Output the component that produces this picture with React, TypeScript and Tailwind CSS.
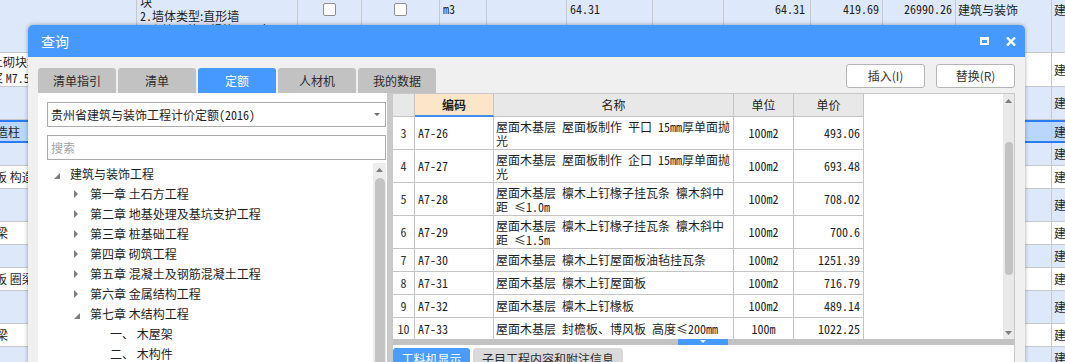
import React from "react";

const UI = "font-['Noto_Sans_CJK_SC','Noto_Sans',sans-serif]";
const MONO = "font-['Noto_Sans_Mono_CJK_SC','Liberation_Mono',monospace]";

// widths of the grid columns behind the dialog
const midCols = ["w-[161px]", "w-[64px]", "w-[78px]", "w-[47px]", "w-[80px]", "w-[86px]", "w-[71px]", "w-[87px]", "w-[72px]", "w-[73px]", "w-[96px]"];

const toneCls: Record<string, string> = {
    blue: "bg-[#dde9fb] border-b border-[#c8c8c8]",
    white: "bg-white border-b border-[#c8c8c8]",
    sel: "bg-[#b9d7fb] border-y-2 border-[#2a7cf0]",
};

const bgRows = [
    { h: "h-[34px]", tone: "white", left: <div className="-ml-[9px] leading-[16px]">土砌块墙<br />浆 <span className={MONO}>M7.5</span></div> },
    { h: "h-[33px]", tone: "blue" },
    { h: "h-[23px]", tone: "sel", left: <div className="-ml-[16px]">构造柱</div> },
    { h: "h-[23px]", tone: "blue" },
    { h: "h-[23px]", tone: "white", left: <div className="-ml-[5px]">板 构造柱</div> },
    { h: "h-[33px]", tone: "blue" },
    { h: "h-[23px]", tone: "white", left: <div className="-ml-[16px]">圈梁</div> },
    { h: "h-[23px]", tone: "blue" },
    { h: "h-[23px]", tone: "white", left: <div className="-ml-[5px]">板 圈梁</div> },
    { h: "h-[33px]", tone: "blue" },
    { h: "h-[23px]", tone: "white", left: <div className="-ml-[16px]">圈梁</div> },
    { h: "h-[23px]", tone: "blue" },
];

const tabs = ["清单指引", "清单", "定额", "人材机", "我的数据"];

const tree = [
    { pad: "pl-[7px]", icon: "open", text: "建筑与装饰工程" },
    { pad: "pl-[27px]", icon: "closed", text: "第一章 土石方工程" },
    { pad: "pl-[27px]", icon: "closed", text: "第二章 地基处理及基坑支护工程" },
    { pad: "pl-[27px]", icon: "closed", text: "第三章 桩基础工程" },
    { pad: "pl-[27px]", icon: "closed", text: "第四章 砌筑工程" },
    { pad: "pl-[27px]", icon: "closed", text: "第五章 混凝土及钢筋混凝土工程" },
    { pad: "pl-[27px]", icon: "closed", text: "第六章 金属结构工程" },
    { pad: "pl-[27px]", icon: "open", text: "第七章 木结构工程" },
    { pad: "pl-[47px]", icon: "", text: "一、 木屋架" },
    { pad: "pl-[47px]", icon: "", text: "二、 木构件" },
];

const rows = [
    { n: 3, code: "A7-26", name: ["屋面木基层 屋面板制作 平口 15mm厚单面抛", "光"], unit: "100m2", price: "493.06" },
    { n: 4, code: "A7-27", name: ["屋面木基层 屋面板制作 企口 15mm厚单面抛", "光"], unit: "100m2", price: "693.48" },
    { n: 5, code: "A7-28", name: ["屋面木基层 檩木上钉椽子挂瓦条 檩木斜中", "距 ≤1.0m"], unit: "100m2", price: "708.02" },
    { n: 6, code: "A7-29", name: ["屋面木基层 檩木上钉椽子挂瓦条 檩木斜中", "距 ≤1.5m"], unit: "100m2", price: "700.6" },
    { n: 7, code: "A7-30", name: ["屋面木基层 檩木上钉屋面板油毡挂瓦条"], unit: "100m2", price: "1251.39" },
    { n: 8, code: "A7-31", name: ["屋面木基层 檩木上钉屋面板"], unit: "100m2", price: "716.79" },
    { n: 9, code: "A7-32", name: ["屋面木基层 檩木上钉椽板"], unit: "100m2", price: "489.14" },
    { n: 10, code: "A7-33", name: ["屋面木基层 封檐板、博风板 高度≤200mm"], unit: "100m", price: "1022.25" },
];

// latin runs in the half-width face, wider gaps between words
function Mixed({ text }: { text: string }) {
    const parts = text.replace(/ /g, "\u2002").split(/([0-9A-Za-z.]+)/);
    return <>{parts.map((p, i) => (i % 2 ? <span key={i} className={MONO}>{p}</span> : p))}</>
}

function Checkbox() {
    return <div className="mt-[3px] w-[13px] h-[13px] border border-[#8f8f8f] rounded-[2px] bg-white" />
}

function TreeIcon({ kind }: { kind: string }) {
    if (kind === "open")
        return <svg width="6" height="6" className="mt-[3px]"><polygon points="6,0 6,6 0,6" fill="#7d7d7d" /></svg>
    if (kind === "closed")
        return <svg width="5" height="8"><polygon points="0,0 4,4 0,8" fill="#7d7d7d" /></svg>
    return null
}

export default function App() {
    return (
        <div className={`relative w-[1065px] h-[362px] overflow-hidden bg-white text-[12px] text-[#1e1e1e] ${UI}`}>
            {/* grid behind the dialog */}
            <div className="flex flex-col">
                <div className="flex h-[53px] bg-[#dde9fb] border-b border-[#c8c8c8]">
                    <div className="w-[137px] shrink-0 border-r border-[#c8c8c8]" />
                    <div className="w-[161px] shrink-0 border-r border-[#c8c8c8] overflow-hidden">
                        <div className="-mt-[5px] pl-[3px] leading-[14px] whitespace-nowrap">块<br /><span className={MONO}>2.</span>墙体类型:直形墙<br />3.砌块品种、规格、强度</div>
                    </div>
                    <div className="w-[64px] shrink-0 border-r border-[#c8c8c8] flex justify-center"><Checkbox /></div>
                    <div className="w-[78px] shrink-0 border-r border-[#c8c8c8] flex justify-center"><Checkbox /></div>
                    <div className={`w-[47px] shrink-0 border-r border-[#c8c8c8] pl-[3px] pt-[2px] leading-[14px] ${MONO}`}>m3</div>
                    <div className="w-[80px] shrink-0 border-r border-[#c8c8c8]" />
                    <div className={`w-[86px] shrink-0 border-r border-[#c8c8c8] pl-[3px] pt-[2px] leading-[14px] ${MONO}`}>64.31</div>
                    <div className="w-[71px] shrink-0 border-r border-[#c8c8c8]" />
                    <div className={`w-[87px] shrink-0 border-r border-[#c8c8c8] pr-[5px] pt-[2px] leading-[14px] text-right ${MONO}`}>64.31</div>
                    <div className={`w-[72px] shrink-0 border-r border-[#c8c8c8] pr-[3px] pt-[2px] leading-[14px] text-right ${MONO}`}>419.69</div>
                    <div className={`w-[73px] shrink-0 border-r border-[#c8c8c8] pr-[3px] pt-[2px] leading-[14px] text-right ${MONO}`}>26990.26</div>
                    <div className="w-[96px] shrink-0 border-r border-[#c8c8c8] pl-[2px] pt-[3px] leading-[14px] whitespace-nowrap">建筑与装饰</div>
                    <div className="flex-1 pl-[2px] pt-[3px] leading-[14px]">建</div>
                </div>
                {bgRows.map((r, i) => (
                    <div key={i} className={`flex ${r.h} ${toneCls[r.tone]}`}>
                        <div className="w-[137px] shrink-0 overflow-hidden border-r border-[#c8c8c8] flex items-center whitespace-nowrap">{r.left}</div>
                        {midCols.map((w, j) => (
                            <div key={j} className={`${w} shrink-0 border-r border-[#c8c8c8]`} />
                        ))}
                        <div className="flex-1 flex items-center pl-[2px]">建</div>
                    </div>
                ))}
            </div>

            {/* dialog */}
            <div className="absolute left-[28px] top-[25px] w-[997px] h-[345px] flex flex-col rounded-t-[5px] overflow-hidden shadow-[0_0_4px_rgba(0,0,0,0.35)]">
                <div className="h-[32px] shrink-0 bg-[#4599ff] flex items-center pl-[13px] pr-[9px] text-white">
                    <span className="text-[14px]">查询</span>
                    <div className="ml-auto flex items-center gap-[17px]">
                        <svg width="9" height="8"><path d="M0 0H9V8H0Z M2 3H7V6H2Z" fill="white" fillRule="evenodd" /></svg>
                        <svg width="10" height="9" viewBox="0 0 10 9"><path d="M1 0.5L9 8.5M9 0.5L1 8.5" stroke="white" strokeWidth="2.4" /></svg>
                    </div>
                </div>

                <div className="flex-1 min-h-0 bg-[#f0f0f0] px-[10px] pt-[7px] flex flex-col">
                    <div className="h-[29px] shrink-0 flex justify-between">
                        <div className="self-end flex gap-[2px]">
                            {tabs.map((t) => (
                                <div key={t} className={`w-[78px] h-[25px] rounded-t-[3px] flex items-center justify-center ${t === "定额" ? "bg-[#4599ff] text-white" : "bg-[#c2c2c2] text-[#2b2b2b]"}`}>{t}</div>
                            ))}
                        </div>
                        <div className="self-start flex gap-[11px]">
                            <button className="w-[79px] h-[24px] bg-white border border-[#b5b5b5] rounded-[3px] text-[#333]">插入(I)</button>
                            <button className="w-[79px] h-[24px] bg-white border border-[#b5b5b5] rounded-[3px] text-[#333]">替换(R)</button>
                        </div>
                    </div>

                    <div className="flex flex-1 min-h-0">
                        {/* left: library tree */}
                        <div className="w-[349px] shrink-0 bg-white flex flex-col pl-[9px] pr-[1px] pt-[9px]">
                            <div className="h-[25px] shrink-0 border border-[#ababab] flex items-center pl-[3px] pr-[5px] whitespace-nowrap">
                                <span>贵州省建筑与装饰工程计价定额<span className={MONO}>(2016)</span></span>
                                <svg width="6" height="3" className="ml-auto"><polygon points="0,0 6,0 3,3" fill="#6d6d6d" /></svg>
                            </div>
                            <div className="mt-[8px] h-[25px] shrink-0 border border-[#ababab] flex items-center pl-[3px] text-[#a3a3a3]">搜索</div>
                            <div className="mt-[3px] flex flex-1 min-h-0">
                                <div className="flex-1 pt-[1px]">
                                    {tree.map((n) => (
                                        <div key={n.text} className={`h-[20px] flex items-center whitespace-nowrap ${n.pad}`}>
                                            <div className="w-[16px] shrink-0 flex items-center"><TreeIcon kind={n.icon} /></div>
                                            <span>{n.text}</span>
                                        </div>
                                    ))}
                                </div>
                                <div className="w-[13px] shrink-0 bg-[#ededed] flex flex-col items-center pt-[5px]">
                                    <svg width="7" height="4"><polygon points="0,4 3.5,0 7,4" fill="#7d7d7d" /></svg>
                                    <div className="mt-[6px] w-[10px] h-[220px] rounded-full bg-[#c3c3c3]" />
                                </div>
                            </div>
                        </div>

                        <div className="w-[5px] shrink-0 bg-[#cacaca]" />

                        {/* right: quota table */}
                        <div className="w-[623px] shrink-0 bg-white border border-[#c8c8c8] flex flex-col">
                            <div className="flex h-[245px] shrink-0">
                                <div className="flex-1 overflow-hidden">
                                    <div className="flex h-[23px] w-[471px]">
                                        <div className="w-[22px] bg-[#e8e8e8] border-r border-b border-[#c4c4c4]" />
                                        <div className="w-[79px] bg-[#fde6c8] border-r border-[#c4c4c4] border-b-2 border-b-[#3d8ef0] flex items-center justify-center font-bold">编码</div>
                                        <div className="w-[240px] bg-[#e8e8e8] border-r border-b border-[#c4c4c4] flex items-center justify-center">名称</div>
                                        <div className="w-[60px] bg-[#e8e8e8] border-r border-b border-[#c4c4c4] flex items-center justify-center">单位</div>
                                        <div className="w-[70px] bg-[#e8e8e8] border-r border-b border-[#c4c4c4] flex items-center justify-center">单价</div>
                                    </div>
                                    {rows.map((r) => {
                                        const two = r.name.length > 1;
                                        return (
                                            <div key={r.n} className={`flex w-[471px] ${two ? "h-[33px]" : "h-[23px]"}`}>
                                                <div className={`w-[22px] border-r border-b border-[#c4c4c4] flex items-center justify-center text-[#333] ${MONO}`}>{r.n}</div>
                                                <div className={`w-[79px] border-r border-b border-[#c4c4c4] flex items-center pl-[3px] ${MONO}`}>{r.code}</div>
                                                <div className={`w-[240px] border-r border-b border-[#c4c4c4] pl-[2px] leading-[14px] whitespace-nowrap overflow-hidden ${two ? "pt-[3px]" : "flex items-center"}`}>
                                                    <div>{r.name.map((l, k) => <div key={k}><Mixed text={l} /></div>)}</div>
                                                </div>
                                                <div className={`w-[60px] border-r border-b border-[#c4c4c4] flex items-center justify-center ${MONO}`}>{r.unit}</div>
                                                <div className={`w-[70px] border-r border-b border-[#c4c4c4] flex items-center justify-end pr-[3px] ${MONO}`}>{r.price}</div>
                                            </div>
                                        )
                                    })}
                                </div>
                                <div className="w-[11px] shrink-0 bg-[#e9e9e9] flex flex-col items-center pt-[5px] pb-[4px]">
                                    <svg width="7" height="4"><polygon points="0,4 3.5,0 7,4" fill="#7d7d7d" /></svg>
                                    <div className="mt-[39px] w-[8px] h-[133px] rounded-full bg-[#c3c3c3]" />
                                    <div className="flex-1" />
                                    <svg width="7" height="4"><polygon points="0,0 7,0 3.5,4" fill="#7d7d7d" /></svg>
                                </div>
                            </div>
                            <div className="h-[6px] shrink-0 flex">
                                <div className="w-[285px] bg-[#c2c2c2]" />
                                <div className="w-[50px] bg-[#4599ff] flex justify-center pt-[1px]">
                                    <svg width="6" height="3"><polygon points="0,0 6,0 3,3" fill="white" /></svg>
                                </div>
                                <div className="flex-1 bg-[#c2c2c2]" />
                            </div>
                            <div className="mt-[3px] flex gap-[3px]">
                                <div className="w-[77px] h-[20px] rounded-t-[3px] bg-[#4a9cff] text-white pt-[4px] leading-[14px] text-center">工料机显示</div>
                                <div className="w-[150px] h-[20px] rounded-t-[3px] bg-[#dadada] text-[#2b2b2b] pt-[4px] leading-[14px] text-center">子目工程内容和附注信息</div>
                            </div>
                        </div>
                    </div>
                </div>
            </div>
        </div>
    )
}
